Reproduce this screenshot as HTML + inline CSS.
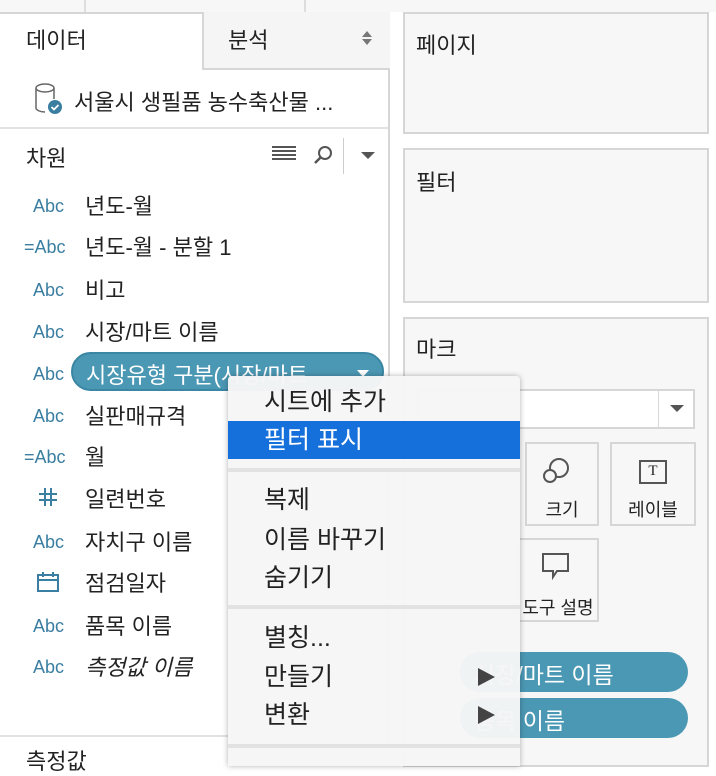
<!DOCTYPE html>
<html><head><meta charset="utf-8"><style>
*{margin:0;padding:0;box-sizing:border-box}
body{width:716px;height:756px;overflow:hidden;background:#fff;font-family:"Liberation Sans","Noto Sans CJK KR",sans-serif;color:#222;position:relative}
.a{position:absolute}
.t{font-size:22px;white-space:nowrap}
.ic{position:absolute;left:33px;font-size:18px;color:#3a7ea1;font-family:"Liberation Sans",sans-serif}
.panel{position:absolute;left:403px;width:306px;border:2px solid #d6d6d6;background:#f7f7f7}
.mi{position:absolute;left:36px;font-size:25px;white-space:nowrap}
.sep{position:absolute;left:0;width:292px;height:4px;background:#e2e2e2}
.pill{position:absolute;background:#4b98b4;color:#fff;border-radius:20px;font-size:23px;white-space:nowrap}
.box{position:absolute;border:2px solid #d6d6d6;background:#f7f7f7;font-size:18px;text-align:center}
</style></head><body>
<div class="a" style="left:0;top:0;width:716px;height:12px;background:#f7f7f7"></div>
<div class="a" style="left:84px;top:0;width:2px;height:12px;background:#ddd"></div>
<div class="a" style="left:304px;top:0;width:2px;height:12px;background:#ddd"></div>
<div class="a" style="left:0;top:12px;width:390px;height:2px;background:#d6d6d6"></div>
<div class="a" style="left:388px;top:12px;width:2px;height:744px;background:#d6d6d6"></div>
<div class="a" style="left:202px;top:12px;width:188px;height:58px;background:#f5f5f5;border-left:2px solid #d6d6d6;border-bottom:2px solid #d6d6d6"></div>
<div class="a t" style="left:26px;top:23px">데이터</div>
<div class="a t" style="left:228px;top:23px">분석</div>
<div class="a" style="left:362px;top:31px;width:0;height:0;border-left:5px solid transparent;border-right:5px solid transparent;border-bottom:6px solid #777"></div>
<div class="a" style="left:362px;top:39px;width:0;height:0;border-left:5px solid transparent;border-right:5px solid transparent;border-top:6px solid #777"></div>
<svg class="a" style="left:34px;top:82px" width="30" height="34"><ellipse cx="11" cy="6" rx="9" ry="4" fill="none" stroke="#666" stroke-width="1.5"/><path d="M2 6V26C2 28 6 30 11 30" fill="none" stroke="#666" stroke-width="1.5"/><path d="M20 6V17" stroke="#666" stroke-width="1.5"/><circle cx="21" cy="25" r="7" fill="#3a7ea1"/><path d="M17.5 25l2.5 2.5 4.5-4.5" stroke="#fff" stroke-width="1.8" fill="none"/></svg>
<div class="a t" style="left:74px;top:85px">서울시 생필품 농수축산물 ...</div>
<div class="a" style="left:0;top:127px;width:388px;height:2px;background:#e2e2e2"></div>
<div class="a t" style="left:26px;top:141px">차원</div>
<div class="a" style="left:272px;top:146px;width:24px;height:16px;background:repeating-linear-gradient(#555 0 2px,transparent 2px 4px)"></div>
<svg class="a" style="left:312px;top:144px" width="22" height="22"><circle cx="13" cy="9" r="6" fill="none" stroke="#555" stroke-width="2"/><path d="M9 13L3 19" stroke="#555" stroke-width="2.5"/></svg>
<div class="a" style="left:343px;top:138px;width:1px;height:36px;background:#ccc"></div>
<div class="a" style="left:361px;top:152px;width:0;height:0;border-left:7px solid transparent;border-right:7px solid transparent;border-top:7px solid #555"></div>
<div class="ic" style="top:196px">Abc</div><div class="a t" style="left:85px;top:189px">년도-월</div>
<div class="ic" style="top:237px;left:24px">=Abc</div><div class="a t" style="left:85px;top:230px">년도-월 - 분할 1</div>
<div class="ic" style="top:280px">Abc</div><div class="a t" style="left:85px;top:273px">비고</div>
<div class="ic" style="top:322px">Abc</div><div class="a t" style="left:85px;top:315px">시장/마트 이름</div>
<div class="ic" style="top:364px">Abc</div>
<div class="pill" style="left:71px;top:352px;width:313px;height:39px;padding:4px 0 0 13px;border:2px solid #3a86a3;font-size:22px">시장유형 구분(시장/마트<span style="position:absolute;left:284px;top:16px;border-left:6px solid transparent;border-right:6px solid transparent;border-top:7px solid #fff"></span></div>
<div class="ic" style="top:406px">Abc</div><div class="a t" style="left:85px;top:399px">실판매규격</div>
<div class="ic" style="top:447px;left:24px">=Abc</div><div class="a t" style="left:85px;top:440px">월</div>
<svg class="a" style="left:38px;top:487px" width="20" height="20"><path d="M7 1V19M13 1V19M1 7H19M1 13H19" stroke="#3a7ea1" stroke-width="2"/></svg>
<div class="a t" style="left:85px;top:482px">일련번호</div>
<div class="ic" style="top:532px">Abc</div><div class="a t" style="left:85px;top:525px">자치구 이름</div>
<svg class="a" style="left:37px;top:572px" width="22" height="20"><rect x="1" y="3" width="20" height="16" fill="none" stroke="#3a7ea1" stroke-width="2"/><path d="M1 8H21M6 0V5M16 0V5" stroke="#3a7ea1" stroke-width="2"/></svg>
<div class="a t" style="left:85px;top:566px">점검일자</div>
<div class="ic" style="top:616px">Abc</div><div class="a t" style="left:85px;top:609px">품목 이름</div>
<div class="ic" style="top:657px">Abc</div><div class="a t" style="left:85px;top:650px;font-style:italic">측정값 이름</div>
<div class="a" style="left:0;top:735px;width:388px;height:2px;background:#e2e2e2"></div>
<div class="a t" style="left:26px;top:744px">측정값</div>

<div class="panel" style="top:12px;height:122px"></div><div class="a t" style="left:416px;top:28px">페이지</div>
<div class="panel" style="top:148px;height:155px"></div><div class="a t" style="left:416px;top:165px">필터</div>
<div class="panel" style="top:317px;height:450px"></div><div class="a t" style="left:416px;top:332px">마크</div>
<div class="a" style="left:417px;top:389px;width:278px;height:40px;border:2px solid #d6d6d6;background:#fff"></div>
<div class="a" style="left:658px;top:391px;width:1px;height:36px;background:#d6d6d6"></div>
<div class="a" style="left:670px;top:405px;border-left:7px solid transparent;border-right:7px solid transparent;border-top:7px solid #555"></div>
<div class="box" style="left:525px;top:442px;width:74px;height:84px;padding-top:52px">크기</div>
<svg class="a" style="left:541px;top:456px" width="32" height="30"><circle cx="18" cy="12" r="9" fill="none" stroke="#555" stroke-width="2"/><circle cx="9" cy="20" r="6" fill="#f7f7f7" stroke="#555" stroke-width="2"/></svg>
<div class="box" style="left:610px;top:442px;width:86px;height:84px;padding-top:52px">레이블</div>
<div class="a" style="left:639px;top:460px;width:28px;height:24px;border:2px solid #555;font-family:'Liberation Serif',serif;font-size:15px;text-align:center;line-height:19px">T</div>
<div class="box" style="left:517px;top:538px;width:82px;height:84px;padding-top:54px">도구 설명</div>
<svg class="a" style="left:541px;top:552px" width="30" height="30"><path d="M2 2H27V19H16L12 25V19H2Z" fill="none" stroke="#555" stroke-width="2"/></svg>
<div class="pill" style="left:460px;top:652px;width:228px;height:40px;padding:4px 0 0 14px">시장/마트 이름</div>
<div class="pill" style="left:460px;top:698px;width:228px;height:40px;padding:4px 0 0 14px">품목 이름</div>

<div class="a" style="left:228px;top:376px;width:292px;height:390px;background:rgba(246,246,246,0.97);box-shadow:0 0 6px rgba(0,0,0,.3);border-radius:4px 4px 0 0">
<div class="mi" style="top:6px">시트에 추가</div>
<div class="a" style="left:0;top:45px;width:292px;height:38px;background:#1570dc"></div>
<div class="mi" style="top:44px;color:#fff">필터 표시</div>
<div class="sep" style="top:92px"></div>
<div class="mi" style="top:104px">복제</div>
<div class="mi" style="top:144px">이름 바꾸기</div>
<div class="mi" style="top:182px">숨기기</div>
<div class="sep" style="top:229px"></div>
<div class="mi" style="top:242px">별칭...</div>
<div class="mi" style="top:281px">만들기</div>
<div class="mi" style="top:319px">변환</div>
<div class="a" style="left:250px;top:292px;border-top:9px solid transparent;border-bottom:9px solid transparent;border-left:17px solid #444"></div>
<div class="a" style="left:250px;top:330px;border-top:9px solid transparent;border-bottom:9px solid transparent;border-left:17px solid #444"></div>
<div class="sep" style="top:368px"></div>
</div>
</body></html>
